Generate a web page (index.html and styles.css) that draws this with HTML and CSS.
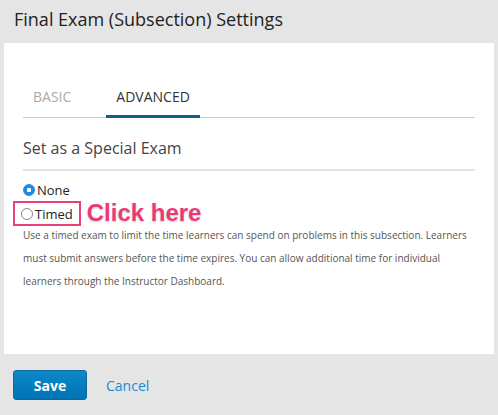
FILE: index.html
```html
<!DOCTYPE html>
<html>
<head>
<meta charset="utf-8">
<link rel="stylesheet" href="styles.css">
</head>
<body>
<div class="modal">
  <h1 class="title">Final Exam (Subsection) Settings</h1>
  <div class="panel">
    <div class="tabs">
      <span class="tab">BASIC</span>
      <span class="tab active">ADVANCED</span>
    </div>
    <h2 class="section-title">Set as a Special Exam</h2>
    <div class="options">
      <label class="option"><span class="radio checked"></span>None</label>
      <div class="timed-row">
        <label class="option boxed"><span class="radio"></span>Timed</label>
        <span class="callout">Click here</span>
      </div>
    </div>
    <p class="desc">Use a timed exam to limit the time learners can spend on problems in this subsection. Learners must submit answers before the time expires. You can allow additional time for individual learners through the Instructor Dashboard.</p>
  </div>
  <div class="actions">
    <button class="btn-save">Save</button>
    <a class="btn-cancel">Cancel</a>
  </div>
</div>
</body>
</html>
```
FILE: styles.css
```css
html, body {
  margin: 0;
  padding: 0;
}
body {
  background: #e5e5e5;
  font-family: "Open Sans", "DejaVu Sans", sans-serif;
  color: #333;
  width: 498px;
  height: 415px;
  overflow: hidden;
}
.modal {
  padding: 0 4px;
}
.title {
  margin: 0;
  padding: 7px 10px 0;
  height: 36px;
  font-size: 18px;
  font-weight: 400;
  line-height: 24px;
  color: #222;
}
.panel {
  background: #fff;
  height: 311px;
  padding: 0 19px;
  box-sizing: border-box;
}
.tabs {
  display: flex;
  padding-top: 45px;
  border-bottom: 1px solid #ccc;
}
.tab {
  font-size: 14px;
  line-height: 18px;
  padding: 0 10px 9px;
  color: #aaa;
}
.tab:first-child {
  margin-right: 25px;
}
.tab.active {
  color: #333;
  border-bottom: 3px solid #0e6384;
  margin-bottom: -1px;
}
.section-title {
  margin: 18px 0 0;
  font-size: 16px;
  font-weight: 400;
  color: #444;
  line-height: 24px;
  padding-bottom: 9px;
  border-bottom: 2px solid #e2e2e2;
}
.options {
  margin-top: 10px;
}
.option {
  display: flex;
  align-items: center;
  font-size: 13px;
  line-height: 18px;
  color: #222;
}
.radio {
  width: 10px;
  height: 10px;
  border: 1px solid #888;
  border-radius: 50%;
  margin-right: 2px;
  box-sizing: content-box;
}
.radio.checked {
  border-color: #1f8fe0;
  background: radial-gradient(circle, #fff 0 2px, #1c8ae0 2.5px);
}
.timed-row {
  display: flex;
  align-items: center;
  margin-top: 2px;
  margin-left: -10px;
}
.option.boxed {
  border: 2px solid #e8417a;
  padding: 2px 6px 1px 6px;
}
.callout {
  font-family: "Liberation Sans", Arial, sans-serif;
  font-weight: 700;
  font-size: 24px;
  line-height: 1;
  color: #e83a77;
  margin-left: 6px;
  margin-top: -2px;
  text-shadow: 0 0 2px #fff, 0 1px 2px rgba(0,0,0,0.25);
}
.desc {
  margin: -2px 0 0;
  font-size: 10px;
  line-height: 23px;
  color: #555;
}
.actions {
  display: flex;
  align-items: center;
  padding: 16px 9px 0;
}
.btn-save {
  width: 74px;
  height: 30px;
  border: 1px solid #0a6aa0;
  border-radius: 3px;
  background: linear-gradient(#0d87c8, #0074b5);
  color: #fff;
  font-family: "Open Sans", sans-serif;
  font-weight: 700;
  font-size: 14px;
  padding: 0;
}
.btn-cancel {
  margin-left: 19px;
  font-size: 14px;
  color: #1a8ad0;
}
```
